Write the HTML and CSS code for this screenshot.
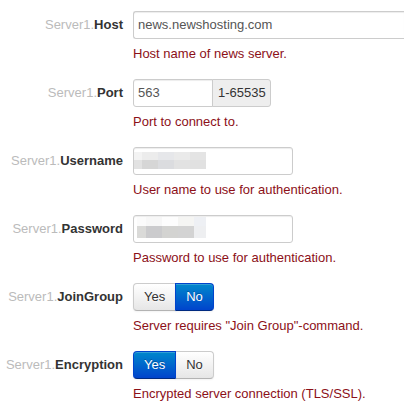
FILE: index.html
```html
<!DOCTYPE html>
<html>
<head>
<meta charset="utf-8">
<link rel="stylesheet" href="styles.css">
</head>
<body>
<form class="form">
  <div class="row">
    <label class="label"><span class="prefix">Server1.</span>Host</label>
    <div class="controls">
      <div class="input input-wide">news.newshosting.com</div>
      <p class="help">Host name of news server.</p>
    </div>
  </div>
  <div class="row">
    <label class="label"><span class="prefix">Server1.</span>Port</label>
    <div class="controls">
      <div class="append">
        <div class="input input-port">563</div><span class="addon">1-65535</span>
      </div>
      <p class="help">Port to connect to.</p>
    </div>
  </div>
  <div class="row">
    <label class="label"><span class="prefix">Server1.</span>Username</label>
    <div class="controls">
      <div class="input input-medium">
        <div class="blur blur-user"></div>
      </div>
      <p class="help">User name to use for authentication.</p>
    </div>
  </div>
  <div class="row">
    <label class="label"><span class="prefix">Server1.</span>Password</label>
    <div class="controls">
      <div class="input input-medium">
        <div class="blur blur-pass"></div>
      </div>
      <p class="help">Password to use for authentication.</p>
    </div>
  </div>
  <div class="row">
    <label class="label"><span class="prefix">Server1.</span>JoinGroup</label>
    <div class="controls">
      <div class="btn-group">
        <button type="button" class="btn">Yes</button><button type="button" class="btn btn-primary">No</button>
      </div>
      <p class="help">Server requires "Join Group"-command.</p>
    </div>
  </div>
  <div class="row">
    <label class="label"><span class="prefix">Server1.</span>Encryption</label>
    <div class="controls">
      <div class="btn-group">
        <button type="button" class="btn btn-primary">Yes</button><button type="button" class="btn">No</button>
      </div>
      <p class="help">Encrypted server connection (TLS/SSL).</p>
    </div>
  </div>
</form>
</body>
</html>
```

FILE: styles.css
```css
html, body {
  margin: 0;
  padding: 0;
  background: #fff;
}
body {
  font-family: "Liberation Sans", Arial, sans-serif;
  font-size: 13px;
  line-height: 18px;
  color: #333;
  overflow: hidden;
}
.form {
  padding-top: 11px;
}
.row {
  display: flex;
  align-items: flex-start;
  gap: 10px;
  margin-bottom: 16px;
}
.label {
  width: 123px;
  flex: none;
  text-align: right;
  padding-top: 5px;
  font-weight: bold;
  color: #333;
  white-space: nowrap;
}
.prefix {
  font-weight: normal;
  color: #bbb;
}
.controls {
  flex: 1;
  min-width: 0;
}
.input {
  box-sizing: border-box;
  height: 28px;
  padding: 4px 4px;
  border: 1px solid #ccc;
  border-radius: 3px;
  background: #fff;
  box-shadow: inset 0 1px 1px rgba(0, 0, 0, 0.075);
  color: #555;
  white-space: nowrap;
  overflow: hidden;
}
.input-wide {
  width: 100%;
  border-right: none;
  border-radius: 3px 0 0 3px;
}
.input-medium {
  width: 160px;
  padding: 0;
}
.append {
  display: flex;
}
.input-port {
  width: 80px;
  border-radius: 3px 0 0 3px;
}
.addon {
  box-sizing: border-box;
  height: 28px;
  padding: 4px 4px 4px 5px;
  margin-left: -1px;
  width: 59px;
  background: #eee;
  border: 1px solid #ccc;
  border-radius: 0 3px 3px 0;
  color: #333;
}
.help {
  margin: 6px 0 0;
  color: #8c1018;
  white-space: nowrap;
}
.blur {
  margin: 4px 0 0 0;
  height: 17px;
}
.blur-user {
  width: 72px;
  background:
    linear-gradient(to right, #f3f3f3 0 8px, #ececec 8px 24px, #e6e7ea 24px 40px, #eaeaea 40px 56px, #e4e4e4 56px 72px) top / 72px 8px no-repeat,
    linear-gradient(to right, #e2e2e2 0 8px, #d6d6d6 8px 24px, #dbdcdf 24px 40px, #e2e2e2 40px 56px, #e1e1e1 56px 72px) bottom / 72px 9px no-repeat;
}
.blur-pass {
  margin: 1px 0 0 3px;
  width: 69px;
  height: 21px;
  background:
    linear-gradient(to right, #fbfbfb 0 9px, #f7f7f7 9px 25px, #fdfdfd 25px 41px, #f5f5f3 41px 57px, #eef0f4 57px 69px) top / 69px 9px no-repeat,
    linear-gradient(to right, #dadad8 0 9px, #cbcbcd 9px 25px, #d3d3d1 25px 41px, #d3d3d3 41px 57px, #eeeff1 57px 69px) bottom / 69px 12px no-repeat;
}
.btn-group {
  display: flex;
}
.btn {
  box-sizing: border-box;
  height: 28px;
  margin: 0;
  padding: 4px 10px;
  font: inherit;
  line-height: 18px;
  color: #333;
  text-shadow: 0 1px 1px rgba(255, 255, 255, 0.75);
  background: linear-gradient(to bottom, #ffffff, #e6e6e6);
  border: 1px solid #ccc;
  border-bottom-color: #b3b3b3;
  box-shadow: inset 0 1px 0 rgba(255, 255, 255, 0.2), 0 1px 2px rgba(0, 0, 0, 0.05);
}
.btn + .btn {
  margin-left: -1px;
}
.btn:first-child {
  border-radius: 4px 0 0 4px;
}
.btn:last-child {
  border-radius: 0 4px 4px 0;
}
.btn-primary {
  color: #fff;
  text-shadow: 0 -1px 0 rgba(0, 0, 0, 0.25);
  background: linear-gradient(to bottom, #0088cc, #0044cc);
  border-color: #0044cc #0044cc #002a80;
  position: relative;
}
```
